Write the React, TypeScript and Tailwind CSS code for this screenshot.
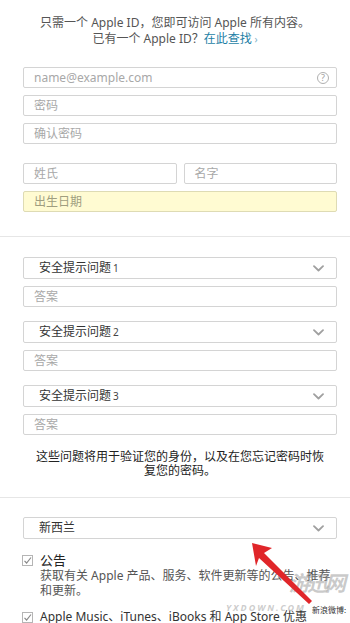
import React from "react";

const font = "font-['Noto_Sans','Noto_Sans_CJK_SC',sans-serif]";

function Field({ placeholder, className = "", children }: { placeholder: string; className?: string; children?: React.ReactNode }) {
  return (
    <div className={`h-[21px] border border-[#d4d4d4] rounded-[2px] flex items-center pl-[10px] pr-[6px] text-[12px] text-[#a8a8a8] ${className}`}>
      <span className="flex-1 leading-[16px]">{placeholder}</span>
      {children}
    </div>
  );
}

function Chevron() {
  return (
    <svg width="11" height="7" viewBox="0 0 11 7" className="mr-[6px]">
      <path d="M1 1.2 L5.5 5.5 L10 1.2" fill="none" stroke="#a0a0a0" strokeWidth="1.8" strokeLinecap="round" strokeLinejoin="round" />
    </svg>
  );
}

function Select({ label, num }: { label: string; num?: string }) {
  return (
    <div className="h-[22px] border border-[#d4d4d4] rounded-[2px] flex items-center pl-[15px] pr-[6px] text-[12px] text-[#333]">
      <span className="flex-1 leading-[16px]">
        {label}
        {num && <span className="text-[10px] text-[#444] ml-[2px]">{num}</span>}
      </span>
      <Chevron />
    </div>
  );
}

function Check() {
  return (
    <span className="w-[11px] h-[11px] border border-[#b5b5b5] flex items-center justify-center mt-[3px] shrink-0">
      <svg width="9" height="9" viewBox="0 0 9 9">
        <path d="M1.5 4.8 L3.6 7 L8 1.5" fill="none" stroke="#8a8a8a" strokeWidth="1.2" />
      </svg>
    </span>
  );
}

export default function App() {
  return (
    <div className={`relative w-[350px] h-[623px] overflow-hidden bg-white ${font}`}>
      <div className="pt-[15px] text-center text-[12px] leading-[16px] text-[#555]">
        <p>只需一个 Apple ID，您即可访问 Apple 所有内容。</p>
        <p>
          已有一个 Apple ID？<span className="text-[#1e7fa6]">在此查找</span>
          <span className="text-[#7fb3c8] text-[10px]"> ›</span>
        </p>
      </div>

      <div className="pl-[23px] pr-[13px] mt-[20px] flex flex-col gap-[7px]">
        <Field placeholder="name@example.com" className="text-[11px]">
          <span className="w-[12px] h-[12px] rounded-full border border-[#b0b0b0] text-[#a0a0a0] text-[9px] leading-none flex items-center justify-center mr-[1px]">?</span>
        </Field>
        <Field placeholder="密码" />
        <Field placeholder="确认密码" />
      </div>

      <div className="pl-[23px] pr-[13px] mt-[19px] flex flex-col gap-[7px]">
        <div className="flex gap-[7px]">
          <Field placeholder="姓氏" className="flex-1" />
          <Field placeholder="名字" className="flex-1" />
        </div>
        <Field placeholder="出生日期" className="bg-[#fffbd2] border-[#dedbb4] text-[#a09e80]" />
      </div>

      <div className="mt-[24px] h-px bg-[#e6e6e6]" />

      <div className="pl-[23px] pr-[13px] mt-[20px] flex flex-col">
        <Select label="安全提示问题" num="1" />
        <Field placeholder="答案" className="mt-[7px]" />
        <div className="mt-[14px]"><Select label="安全提示问题" num="2" /></div>
        <Field placeholder="答案" className="mt-[7px]" />
        <div className="mt-[14px]"><Select label="安全提示问题" num="3" /></div>
        <Field placeholder="答案" className="mt-[7px]" />
      </div>

      <p className="mt-[15px] pl-[34px] pr-[24px] text-center text-[12px] leading-[14px] text-[#222]">
        这些问题将用于验证您的身份，以及在您忘记密码时恢复您的密码。
      </p>

      <div className="mt-[19px] h-px bg-[#e6e6e6]" />

      <div className="pl-[23px] pr-[13px] mt-[19px]">
        <Select label="新西兰" />
      </div>

      <div className="pl-[22px] pr-[10px] mt-[13px] flex gap-[7px]">
        <Check />
        <div>
          <p className="text-[13px] leading-[16px] text-[#222]">公告</p>
          <p className="text-[12px] leading-[15px] text-[#555]">
            获取有关 Apple 产品、服务、软件更新等的公告、推荐和更新。
          </p>
        </div>
      </div>

      <div className="pl-[22px] mt-[11px] flex gap-[7px]">
        <Check />
        <p className="text-[12px] leading-[16px] text-[#333] whitespace-nowrap">Apple Music、iTunes、iBooks 和 App Store 优惠</p>
      </div>

      {/* watermark */}
      <div className="absolute left-[289px] top-[572px] whitespace-nowrap text-[21px] leading-none italic font-bold text-[rgba(150,150,150,0.5)] font-['Noto_Sans_CJK_SC',sans-serif] tracking-[-3px]">
        游迅网
      </div>
      <div className="absolute left-[226px] top-[603px] whitespace-nowrap text-[9px] leading-none italic font-bold text-[rgba(170,170,170,0.6)] tracking-[2px]">
        YXDOWN.COM
      </div>
      <div className="absolute left-[312px] top-[606px] whitespace-nowrap text-[8px] leading-none text-[#333] font-['Noto_Sans_CJK_SC',sans-serif]">
        新浪微博:
      </div>

      {/* red arrow */}
      <svg className="absolute left-0 top-0 pointer-events-none" width="350" height="623" viewBox="0 0 350 623">
        <polygon points="252,543 272,548 264,553 312,601 309,604 259,558 256,566" fill="#e0262a" />
      </svg>
    </div>
  );
}
